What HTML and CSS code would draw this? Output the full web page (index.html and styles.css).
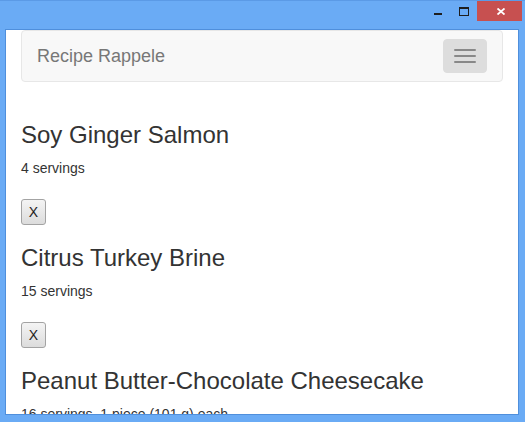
FILE: index.html
```html
<!DOCTYPE html>
<html>
<head>
<meta charset="utf-8">
<title>Recipe Rappele</title>
<link rel="stylesheet" href="styles.css">
</head>
<body>
<div class="window">
  <div class="titlebar">
    <div class="ctl ctl-min"><span class="dash"></span></div>
    <div class="ctl ctl-max"><span class="box"></span></div>
    <div class="ctl ctl-close">
      <svg width="8" height="7" viewBox="0 0 8 7"><path d="M0.5 0.5 L7.5 6.5 M7.5 0.5 L0.5 6.5" stroke="#fff" stroke-width="1.8" fill="none"/></svg>
    </div>
  </div>
  <div class="client">
    <div class="page">
      <nav class="navbar">
        <span class="brand">Recipe Rappele</span>
        <button class="toggle" type="button"><span class="bar"></span><span class="bar"></span><span class="bar"></span></button>
      </nav>
      <div class="recipe">
        <h3 class="title">Soy Ginger Salmon</h3>
        <p class="servings">4 servings</p>
        <div class="actions"><button class="remove" type="button">X</button></div>
      </div>
      <div class="recipe">
        <h3 class="title">Citrus Turkey Brine</h3>
        <p class="servings">15 servings</p>
        <div class="actions"><button class="remove" type="button">X</button></div>
      </div>
      <div class="recipe">
        <h3 class="title">Peanut Butter-Chocolate Cheesecake</h3>
        <p class="servings">16 servings, 1 piece (101 g) each</p>
        <div class="actions"><button class="remove" type="button">X</button></div>
      </div>
    </div>
  </div>
</div>
</body>
</html>
```

FILE: styles.css
```css
html, body {
  margin: 0;
  padding: 0;
  height: 100%;
}
body {
  background: #6aabf5;
  font-family: "Liberation Sans", Arial, sans-serif;
  overflow: hidden;
}
.window {
  height: 422px;
  box-sizing: border-box;
  border-top: 1px solid #5b9ae6;
  display: flex;
  flex-direction: column;
}
.titlebar {
  height: 28px;
  display: flex;
  justify-content: flex-end;
  align-items: flex-start;
  padding-right: 3px;
  flex: none;
}
.ctl {
  height: 20px;
  display: flex;
  justify-content: center;
  align-items: flex-start;
}
.ctl-min { width: 26px; }
.ctl-max { width: 26px; }
.ctl-close {
  width: 45px;
  background: #c75050;
}
.dash {
  display: block;
  width: 8px;
  height: 2px;
  margin-top: 12px;
  background: #1e1e1e;
}
.box {
  display: block;
  width: 8px;
  height: 6px;
  margin-top: 6px;
  border: 1px solid #1e1e1e;
  border-top-width: 2px;
}
.ctl-close svg {
  display: block;
  margin-top: 7px;
  margin-left: 2px;
}
.client {
  flex: 1;
  margin: 0 6px 7px 5px;
  border: 1px solid #4f8fdc;
  background: #fff;
  overflow: hidden;
}
.page {
  padding: 0 15px;
  color: #333;
  font-size: 14px;
  line-height: 20px;
  display: flex;
  flex-direction: column;
}
.navbar {
  height: 50px;
  flex: none;
  background: #f8f8f8;
  border: 1px solid #e7e7e7;
  border-radius: 4px;
  margin-bottom: 20px;
  display: flex;
  justify-content: space-between;
  align-items: flex-start;
}
.brand {
  padding: 15px;
  font-size: 18px;
  line-height: 20px;
  color: #777;
}
.toggle {
  margin: 8px 15px 0 0;
  padding: 9px 10px;
  width: 44px;
  height: 34px;
  box-sizing: border-box;
  background: #ddd;
  border: 1px solid #ddd;
  border-radius: 4px;
  display: flex;
  flex-direction: column;
  gap: 4px;
}
.bar {
  display: block;
  width: 22px;
  height: 2px;
  border-radius: 1px;
  background: #888;
}
.recipe {
  flex: none;
}
.title {
  margin: 20px 0 10px;
  font-size: 24px;
  font-weight: 500;
  line-height: 1.1;
}
.servings {
  margin: 0 0 10px;
}
.actions {
  padding-top: 10.5px;
  display: flex;
}
.remove {
  width: 25px;
  height: 26px;
  padding: 0;
  margin: 0;
  font-family: "Liberation Sans", Arial, sans-serif;
  font-size: 14px;
  color: #222;
  background: linear-gradient(#f4f4f4, #dcdcdc);
  border: 1px solid #a3a3a3;
  border-radius: 3px;
}
```
